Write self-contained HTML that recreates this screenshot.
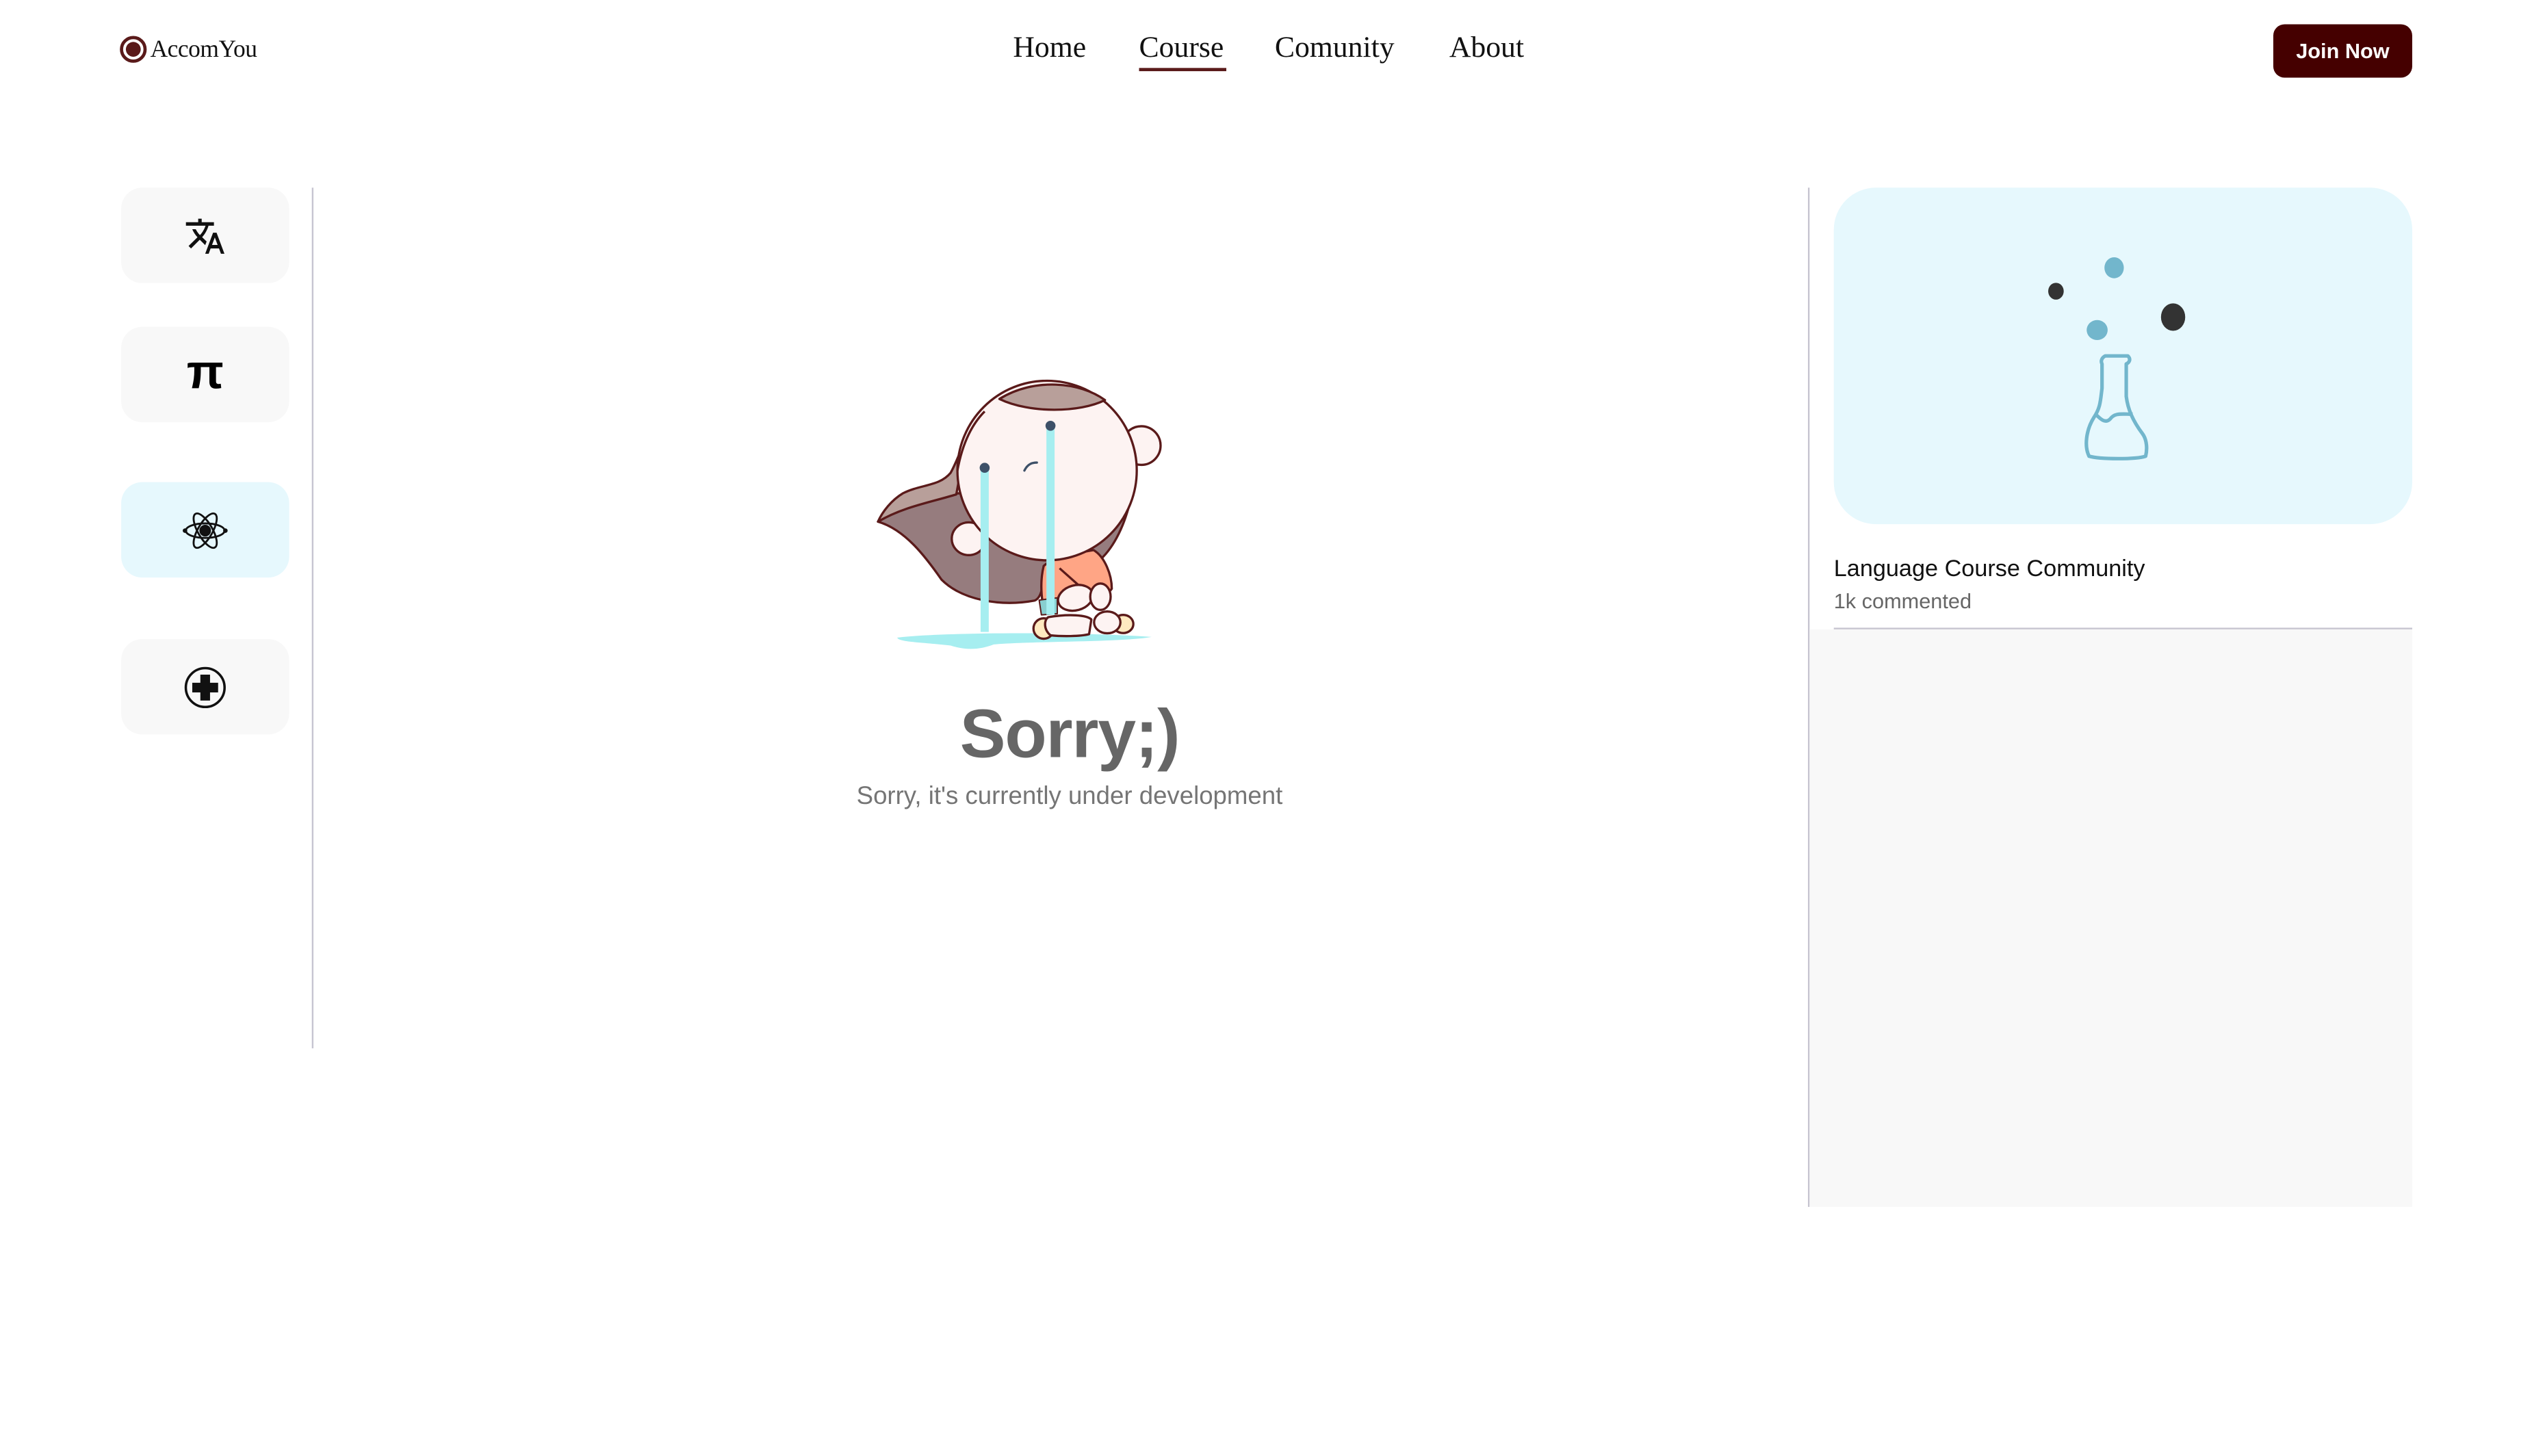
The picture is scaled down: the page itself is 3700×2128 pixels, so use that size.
<!DOCTYPE html>
<html><head><meta charset="utf-8"><style>
html,body{margin:0;padding:0;background:#fff;width:3700px;height:2120px;overflow:hidden}
#w{position:absolute;left:0;top:0;width:1580px;height:900px;transform:scale(2.361,2.3645);transform-origin:0 0}
.a{position:absolute}
.serif{font-family:"Liberation Serif",serif}
.sans{font-family:"Liberation Sans",sans-serif}
.side{position:absolute;left:75px;width:104px;height:59px;background:#f8f8f8;border-radius:13px;display:flex;align-items:center;justify-content:center}
.nav{position:absolute;top:20px;font-size:18.5px;color:#111;font-family:"Liberation Serif",serif}
</style></head><body><div id="w">
<svg class="a" style="left:74px;top:22px" width="17" height="17" viewBox="0 0 17 17"><circle cx="8.5" cy="8.5" r="7.3" fill="none" stroke="#5a1a1a" stroke-width="2"/><circle cx="8.5" cy="8.5" r="4.6" fill="#5a1a1a"/></svg>
<div class="a serif" style="left:93px;top:23px;font-size:15px;color:#111;letter-spacing:-0.2px">AccomYou</div>
<div class="nav" style="left:627px">Home</div>
<div class="nav" style="left:705px">Course</div>
<div class="a" style="left:705px;top:42px;width:54px;height:2px;background:#5a1a1a"></div>
<div class="nav" style="left:789px">Comunity</div>
<div class="nav" style="left:897px">About</div>
<div class="a sans" style="left:1407px;top:15px;width:86px;height:33px;background:#450000;border-radius:7px;color:#fff;font-size:13px;font-weight:bold;display:flex;align-items:center;justify-content:center">Join Now</div>

<div class="side" style="top:116px"><svg width="26" height="26" viewBox="0 0 24 24"><path d="M12.9 15.1l-2.6-2.5 0-.1c1.7-1.9 2.9-4.1 3.6-6.5H17V4h-7V2H8v2H1v2h11.2c-.7 2-1.7 3.8-3.2 5.4-1-1.1-1.8-2.2-2.4-3.4h-2c.7 1.6 1.7 3.2 3 4.6l-5.1 5 1.4 1.4 5-5 3.1 3.1.8-2zM18.5 10h-2L12 22h2l1.1-3h4.8l1.1 3h2l-4.5-12zm-2.6 7l1.6-4.3 1.6 4.3h-3.2z" fill="#111"/></svg></div>
<div class="side" style="top:202px"><div class="sans" style="font-size:30px;font-weight:bold;color:#000;line-height:1;margin-top:-2px">π</div></div>
<div class="side" style="top:298px;background:#e6f8fd"><svg width="28" height="28" viewBox="0 0 28 28" fill="none" stroke="#111" stroke-width="1.2"><ellipse cx="14" cy="14" rx="12" ry="4.5"/><ellipse cx="14" cy="14" rx="12" ry="4.5" transform="rotate(60 14 14)"/><ellipse cx="14" cy="14" rx="12" ry="4.5" transform="rotate(-60 14 14)"/><circle cx="14" cy="14" r="3" fill="#111"/><circle cx="1.5" cy="14" r=".8" fill="#111"/><circle cx="26.5" cy="14" r=".8" fill="#111"/></svg></div>
<div class="side" style="top:395px"><svg width="28" height="28" viewBox="0 0 28 28"><circle cx="14" cy="14" r="12" fill="none" stroke="#111" stroke-width="1.5"/><path d="M11 6h6v5h5v6h-5v5h-6v-5H6v-6h5z" fill="#111"/></svg></div>
<div class="a" style="left:193px;top:116px;width:1px;height:532px;background:#c6c4d0"></div>

<svg class="a" style="left:541.6px;top:228.5px" width="193.9" height="177.1" viewBox="0 0 1380 1260">
<g stroke="#5a1a1a" stroke-width="10" stroke-linejoin="round">
<path d="M95,1175 C300,1150 900,1150 1215,1172 C1100,1195 700,1190 520,1205 C460,1228 400,1232 330,1210 C200,1195 100,1195 95,1175Z" fill="#a6eef0" stroke="none"/>
<path d="M10,665 C120,600 250,560 360,540 L1120,580 C1090,700 1040,790 980,840 L740,860 C740,950 730,1000 700,1012 C550,1040 380,1010 290,920 C220,820 130,700 10,665Z" fill="#967c7e"/>
<path d="M480,180 C400,260 370,380 330,450 C280,510 200,500 120,540 C70,570 30,620 10,665 C120,600 240,580 355,545 L400,300Z" fill="#b89f9a"/>
<ellipse cx="410" cy="740" rx="75" ry="72" fill="#fdf3f2"/>
<path d="M740,860 C780,820 900,800 960,790 C1010,820 1040,900 1040,960 L1000,1010 L735,1020 C725,950 730,900 740,860Z" fill="#ffa585"/>
<path d="M810,870 L900,950" fill="none"/>
<path d="M720,1010 L800,1000 L800,1070 L730,1075Z" fill="#88cfd0" stroke-width="6"/>
<circle cx="1170" cy="330" r="85" fill="#fdf3f2"/>
<circle cx="755" cy="440" r="395" fill="#fdf3f2"/>
<path d="M545,125 C700,30 900,50 1010,130 C900,185 680,190 545,125Z" fill="#b89f9a"/>
<path d="M480,180 C420,240 380,330 360,440" fill="none"/>
<ellipse cx="880" cy="1000" rx="78" ry="55" fill="#fdf3f2" transform="rotate(-15 880 1000)"/>
<ellipse cx="990" cy="995" rx="45" ry="58" fill="#fdf3f2"/>
<ellipse cx="1090" cy="1115" rx="45" ry="40" fill="#ffe9c0"/>
<ellipse cx="1020" cy="1108" rx="58" ry="48" fill="#fdf3f2"/>
<ellipse cx="740" cy="1135" rx="45" ry="45" fill="#ffe9c0"/>
<path d="M760,1085 C850,1070 930,1075 950,1095 L940,1160 C900,1170 820,1170 770,1165 C740,1140 740,1100 760,1085Z" fill="#fdf3f2"/>
</g>
<path d="M655,440 C670,410 690,405 710,405" fill="none" stroke="#3d5068" stroke-width="10" stroke-linecap="round"/>
<rect x="462" y="430" width="36" height="720" fill="#a6eef0"/>
<rect x="752" y="245" width="36" height="830" fill="#a6eef0"/>
<circle cx="480" cy="428" r="22" fill="#3d5068"/>
<circle cx="770" cy="243" r="22" fill="#3d5068"/>
</svg>

<div class="a sans" style="left:462px;width:400px;top:431px;text-align:center;font-size:42.5px;font-weight:bold;color:#666;letter-spacing:-0.5px">Sorry;)</div>
<div class="a sans" style="left:462px;width:400px;top:484px;text-align:center;font-size:15.5px;color:#757575">Sorry, it's currently under development</div>

<div class="a" style="left:1119px;top:116px;width:1px;height:630px;background:#c6c4d0"></div>
<div class="a" style="left:1120px;top:389px;width:373px;height:357px;background:#f8f8f8"></div>
<div class="a" style="left:1135px;top:116px;width:358px;height:208px;background:#e6f8fd;border-radius:26px"></div>
<svg class="a" style="left:1135px;top:116px" width="358" height="208" viewBox="1135 116 358 208">
<ellipse cx="1308.5" cy="165.5" rx="6" ry="6.5" fill="#72b6cc"/>
<ellipse cx="1272.5" cy="180" rx="4.8" ry="5.2" fill="#333"/>
<ellipse cx="1345" cy="196" rx="7.5" ry="8.5" fill="#333"/>
<ellipse cx="1298" cy="204" rx="6.5" ry="6.2" fill="#72b6cc"/>
<g fill="none" stroke="#72b6cc" stroke-width="2.2" stroke-linejoin="round">
<path d="M1303,220 L1317,220 C1319,222 1318,224 1316,225 L1316,245 C1317,253 1320,260 1326,268 C1329,272 1329,278 1328,282 C1322,284 1300,284 1293,282 C1290,276 1291,266 1296,258 C1300,252 1300,248 1301,240 L1301,225 C1300,223 1301,221 1303,220Z"/>
<path d="M1297,256 C1300,259 1303,262 1306,259 C1309,255 1313,256 1320,256"/>
</g>
</svg>
<div class="a sans" style="left:1135px;top:344px;font-size:14.5px;color:#111">Language Course Community</div>
<div class="a sans" style="left:1135px;top:364px;font-size:13px;color:#666">1k commented</div>
<div class="a" style="left:1135px;top:388px;width:358px;height:1px;background:#c6c4d0"></div>
</div></body></html>
